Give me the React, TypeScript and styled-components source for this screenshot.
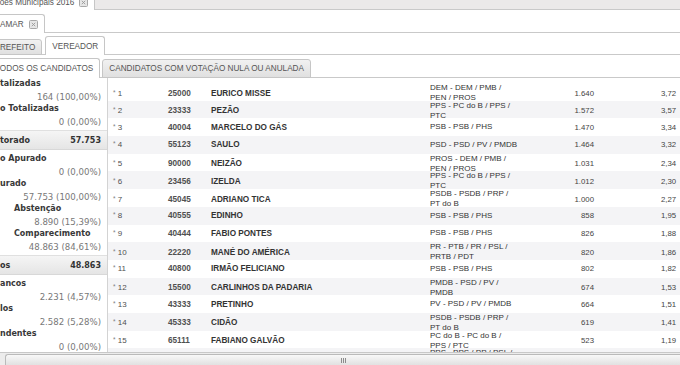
import React from 'react';
import styled, { createGlobalStyle } from 'styled-components';

type Candidate = {
  rank: number;
  number: string;
  name: string;
  party: string[];
  votes: string;
  pct: string;
};

const candidates: Candidate[] = [
  { rank: 1, number: '25000', name: 'EURICO MISSE', party: ['DEM - DEM / PMB /', 'PEN / PROS'], votes: '1.640', pct: '3,72' },
  { rank: 2, number: '23333', name: 'PEZÃO', party: ['PPS - PC do B / PPS /', 'PTC'], votes: '1.572', pct: '3,57' },
  { rank: 3, number: '40004', name: 'MARCELO DO GÁS', party: ['PSB - PSB / PHS'], votes: '1.470', pct: '3,34' },
  { rank: 4, number: '55123', name: 'SAULO', party: ['PSD - PSD / PV / PMDB'], votes: '1.464', pct: '3,32' },
  { rank: 5, number: '90000', name: 'NEIZÃO', party: ['PROS - DEM / PMB /', 'PEN / PROS'], votes: '1.031', pct: '2,34' },
  { rank: 6, number: '23456', name: 'IZELDA', party: ['PPS - PC do B / PPS /', 'PTC'], votes: '1.012', pct: '2,30' },
  { rank: 7, number: '45045', name: 'ADRIANO TICA', party: ['PSDB - PSDB / PRP /', 'PT do B'], votes: '1.000', pct: '2,27' },
  { rank: 8, number: '40555', name: 'EDINHO', party: ['PSB - PSB / PHS'], votes: '858', pct: '1,95' },
  { rank: 9, number: '40444', name: 'FABIO PONTES', party: ['PSB - PSB / PHS'], votes: '826', pct: '1,88' },
  { rank: 10, number: '22220', name: 'MANÉ DO AMÉRICA', party: ['PR - PTB / PR / PSL /', 'PRTB / PDT'], votes: '820', pct: '1,86' },
  { rank: 11, number: '40800', name: 'IRMÃO FELICIANO', party: ['PSB - PSB / PHS'], votes: '802', pct: '1,82' },
  { rank: 12, number: '15500', name: 'CARLINHOS DA PADARIA', party: ['PMDB - PSD / PV /', 'PMDB'], votes: '674', pct: '1,53' },
  { rank: 13, number: '43333', name: 'PRETINHO', party: ['PV - PSD / PV / PMDB'], votes: '664', pct: '1,51' },
  { rank: 14, number: '45333', name: 'CIDÃO', party: ['PSDB - PSDB / PRP /', 'PT do B'], votes: '619', pct: '1,41' },
  { rank: 15, number: '65111', name: 'FABIANO GALVÃO', party: ['PC do B - PC do B /', 'PPS / PTC'], votes: '523', pct: '1,19' },
  { rank: 16, number: '23123', name: 'BETINHO', party: ['PPS - PPS / PP / PSL /', 'PTC'], votes: '498', pct: '1,13' },
];

type Stat =
  | { kind: 'pair'; label: string; value: string; indent?: boolean }
  | { kind: 'band'; label: string; value: string };

const stats: Stat[] = [
  { kind: 'pair', label: 'talizadas', value: '164 (100,00%)' },
  { kind: 'pair', label: 'o Totalizadas', value: '0 (0,00%)' },
  { kind: 'band', label: 'torado', value: '57.753' },
  { kind: 'pair', label: 'o Apurado', value: '0 (0,00%)' },
  { kind: 'pair', label: 'urado', value: '57.753 (100,00%)' },
  { kind: 'pair', label: 'Abstenção', value: '8.890 (15,39%)', indent: true },
  { kind: 'pair', label: 'Comparecimento', value: '48.863 (84,61%)', indent: true },
  { kind: 'band', label: 'os', value: '48.863' },
  { kind: 'pair', label: 'ancos', value: '2.231 (4,57%)' },
  { kind: 'pair', label: 'los', value: '2.582 (5,28%)' },
  { kind: 'pair', label: 'ndentes', value: '0 (0,00%)' },
  { kind: 'pair', label: 'tos Válidos', value: '46.632 (95,43%)' },
];

const CloseIcon = () => (
  <svg width="9" height="9" viewBox="0 0 9 9">
    <rect x="0.5" y="0.5" width="8" height="8" rx="1" fill="#e6e6e6" stroke="#a8a8a8" />
    <path d="M2.8 2.8 L6.2 6.2 M6.2 2.8 L2.8 6.2" stroke="#9a9a9a" strokeWidth="0.9" />
  </svg>
);

const App = () => (
  <>
    <GlobalStyle />
    <Screen>
      <TabStrip $h={10} $bg="#ebe9e9">
        <Tab $active $h={17} $shift={-25}>
          Eleições Municipais 2016 <CloseIcon />
        </Tab>
      </TabStrip>
      <TabStrip $h={23}>
        <Tab $active $h={19} $shift={-7}>
          AMAR <CloseIcon />
        </Tab>
      </TabStrip>
      <TabStrip $h={22}>
        <Tab $h={16} $shift={-12.5}>PREFEITO</Tab>
        <Tab $active $h={19}>VEREADOR</Tab>
      </TabStrip>
      <TabStrip $h={23} $gap={2}>
        <Tab $active $h={20} $shift={-12}>TODOS OS CANDIDATOS</Tab>
        <Tab $h={19}>CANDIDATOS COM VOTAÇÃO NULA OU ANULADA</Tab>
      </TabStrip>

      <Body>
        <SidePanel>
          {stats.map((s, i) =>
            s.kind === 'band' ? (
              <TotalBand key={i}>
                <span>{s.label}</span>
                <span>{s.value}</span>
              </TotalBand>
            ) : (
              <div key={i}>
                <StatLabel $indent={s.indent}>{s.label}</StatLabel>
                <StatValue>{s.value}</StatValue>
              </div>
            )
          )}
        </SidePanel>

        <Table>
          {candidates.map((c, i) => (
            <Row key={c.rank} $alt={i % 2 === 1}>
              <Rank>
                <Star>*</Star> {c.rank}
              </Rank>
              <Num>{c.number}</Num>
              <Name>{c.name}</Name>
              <Party>
                {c.party.map((line, j) => (
                  <div key={j}>{line}</div>
                ))}
              </Party>
              <Votes>{c.votes}</Votes>
              <Pct>{c.pct}</Pct>
            </Row>
          ))}
        </Table>
      </Body>

      <HScroll>
        <Thumb>
          <Grip />
        </Thumb>
      </HScroll>
    </Screen>
  </>
);

const GlobalStyle = createGlobalStyle`
  html, body {
    margin: 0;
    padding: 0;
    background: #fff;
    overflow: hidden;
  }
  body {
    font-family: "Liberation Sans", Arial, sans-serif;
  }
`;

const Screen = styled.div`
  width: 680px;
  height: 365px;
  overflow: hidden;
  display: flex;
  flex-direction: column;
  background: #fff;
`;

const TabStrip = styled.div<{ $h: number; $bg?: string; $gap?: number }>`
  flex: none;
  height: ${(p) => p.$h}px;
  display: flex;
  align-items: flex-end;
  gap: ${(p) => p.$gap ?? 3}px;
  overflow: hidden;
  background: linear-gradient(#c9c9c9, #c9c9c9) bottom / 100% 1px no-repeat,
    ${(p) => p.$bg || '#fff'};
`;

const Tab = styled.div<{ $active?: boolean; $h: number; $shift?: number }>`
  flex: none;
  box-sizing: border-box;
  height: ${(p) => p.$h}px;
  margin-left: ${(p) => p.$shift ?? 0}px;
  padding: 0 6px;
  display: flex;
  align-items: center;
  gap: 5px;
  border: 1px solid #c6c6c6;
  border-bottom: ${(p) => (p.$active ? 'none' : '1px solid #c6c6c6')};
  border-radius: 3px 3px 0 0;
  background: ${(p) => (p.$active ? '#fff' : 'linear-gradient(#f1f1f1, #e0e0e0)')};
  color: #555;
  font-size: 8.2px;
  white-space: nowrap;

  svg {
    flex: none;
  }
`;

const Body = styled.div`
  flex: none;
  height: 274px;
  display: flex;
  overflow: hidden;
`;

const SidePanel = styled.div`
  flex: none;
  width: 108px;
  box-sizing: border-box;
  border-right: 1px solid #d3d3d3;
  font-family: "DejaVu Sans", Verdana, sans-serif;
`;

const StatLabel = styled.div<{ $indent?: boolean }>`
  padding-left: ${(p) => (p.$indent ? 14 : 0)}px;
  font-size: 8px;
  font-weight: bold;
  line-height: 12.5px;
  color: #383838;
  white-space: nowrap;
`;

const StatValue = styled.div`
  padding-right: 6px;
  text-align: right;
  font-size: 8.6px;
  line-height: 12.5px;
  color: #787878;
  white-space: nowrap;
`;

const TotalBand = styled.div`
  height: 18px;
  margin: 2px 0 3px;
  padding-right: 6px;
  display: flex;
  align-items: center;
  justify-content: space-between;
  border-top: 1px solid #e0e0e0;
  border-bottom: 1px solid #d8d8d8;
  background: linear-gradient(#f5f5f5, #e5e5e5);
  font-size: 8px;
  font-weight: bold;
  color: #333;
`;

const Table = styled.div`
  flex: 1;
  padding: 5px 0 0 5px;
  overflow: hidden;
`;

const Row = styled.div<{ $alt: boolean }>`
  display: grid;
  grid-template-columns: 55px 43px 219px 124px 40px 1fr;
  align-items: center;
  height: 17.7px;
  margin-left: -5px;
  padding-left: 5px;
  background: ${(p) => (p.$alt ? '#f4f4f6' : '#fff')};
  white-space: nowrap;
`;

const Rank = styled.div`
  font-size: 8px;
  color: #505050;
`;

const Star = styled.span`
  font-size: 6.5px;
  color: #808080;
  vertical-align: 1px;
`;

const Num = styled.div`
  font-size: 8.2px;
  font-weight: bold;
  color: #505050;
`;

const Name = styled.div`
  font-size: 8.2px;
  font-weight: bold;
  color: #333;
`;

const Party = styled.div`
  font-size: 8px;
  line-height: 10px;
  color: #333;
`;

const Votes = styled.div`
  text-align: right;
  font-size: 7.8px;
  color: #444;
`;

const Pct = styled.div`
  padding-left: 67px;
  font-size: 7.8px;
  color: #444;
`;

const HScroll = styled.div`
  flex: none;
  height: 13px;
  box-sizing: border-box;
  padding: 1px 0 0 5px;
  display: flex;
  border-top: 1px solid #c8c8c8;
  background: #ececec;
`;

const Thumb = styled.div`
  flex: 1;
  display: flex;
  align-items: center;
  justify-content: center;
  border: 1px solid #bababa;
  border-right: none;
  border-bottom: none;
  border-radius: 3px 0 0 0;
  background: linear-gradient(#f8f8f8, #e1e1e1);
`;

const Grip = styled.div`
  width: 5px;
  height: 5px;
  background: repeating-linear-gradient(90deg, #8c8c8c 0 1px, transparent 1px 2px);
`;

export default App;
